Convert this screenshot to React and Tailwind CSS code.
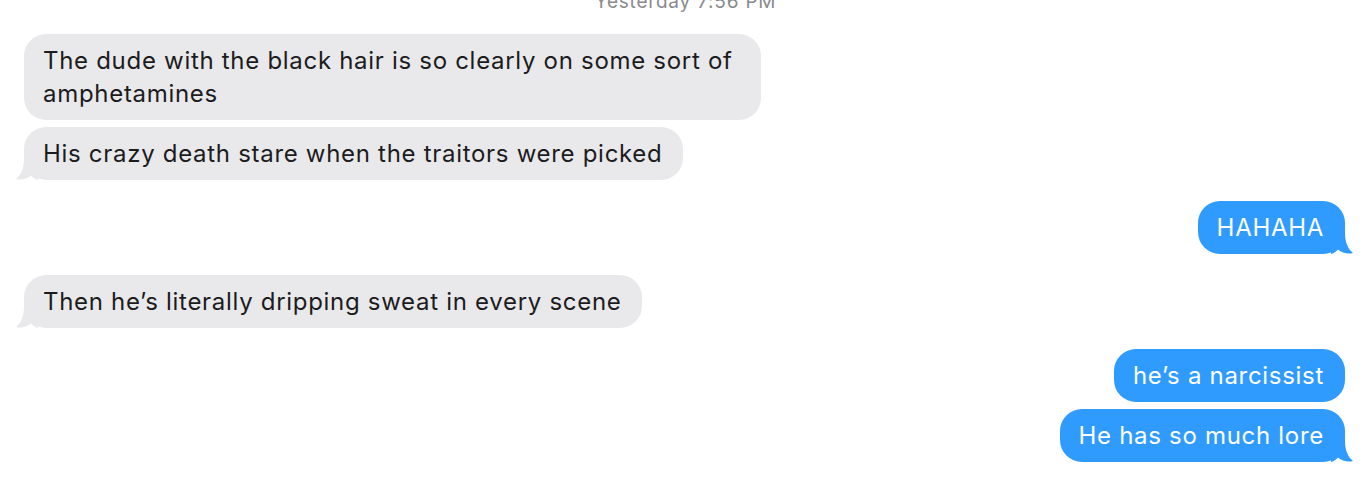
import React from 'react';

const GRAY = '#e9e9eb';
const BLUE = '#2f9bfe';

// little curled tail under the last bubble of a group
const Tail = ({ side, color }) => (
  <svg
    className={`absolute bottom-0 w-[22px] h-[22px] ${side === 'left' ? '-left-[8px]' : '-right-[8px] -scale-x-100'}`}
    viewBox="0 0 22 22"
  >
    <path d="M22 0 L8 0 C8 9 6 16 0 21 C5 22.5 11 21 15 17.5 C17 19.5 19 21.5 22 22 Z" fill={color} />
  </svg>
);

const Bubble = ({ from, tail, children }) => {
  const me = from === 'me';
  const color = me ? BLUE : GRAY;
  return (
    <div className={`flex ${me ? 'justify-end pr-[21px]' : 'justify-start pl-6'}`}>
      <div
        className={`relative max-w-[737px] rounded-[22px] pl-[19px] pr-[21px] py-[10px] text-[24px] tracking-[0.7px] leading-[33px] ${
          me ? 'bg-[#2f9bfe] text-white' : 'bg-[#e9e9eb] text-[#1c1c1e]'
        }`}
      >
        {tail && <Tail side={me ? 'right' : 'left'} color={color} />}
        <span className="relative">{children}</span>
      </div>
    </div>
  );
};

export default function App() {
  return (
    <div className="w-[1366px] h-[480px] overflow-hidden bg-white font-['Inter',sans-serif]">
      <div className="-mt-[9px] text-center text-[19px] tracking-[0.8px] leading-[22px] text-[#8a8a8e] pl-[5px]">
        Yesterday 7:56 PM
      </div>

      <div className="mt-[21px] flex flex-col">
        <div className="flex flex-col gap-[7px]">
          <Bubble from="them">The dude with the black hair is so clearly on some sort of amphetamines</Bubble>
          <Bubble from="them" tail>His crazy death stare when the traitors were picked</Bubble>
        </div>
        <div className="mt-[21px]">
          <Bubble from="me" tail>HAHAHA</Bubble>
        </div>
        <div className="mt-[21px]">
          <Bubble from="them" tail>Then he’s literally dripping sweat in every scene</Bubble>
        </div>
        <div className="mt-[21px] flex flex-col gap-[7px]">
          <Bubble from="me">he’s a narcissist</Bubble>
          <Bubble from="me" tail>He has so much lore</Bubble>
        </div>
      </div>
    </div>
  );
}
